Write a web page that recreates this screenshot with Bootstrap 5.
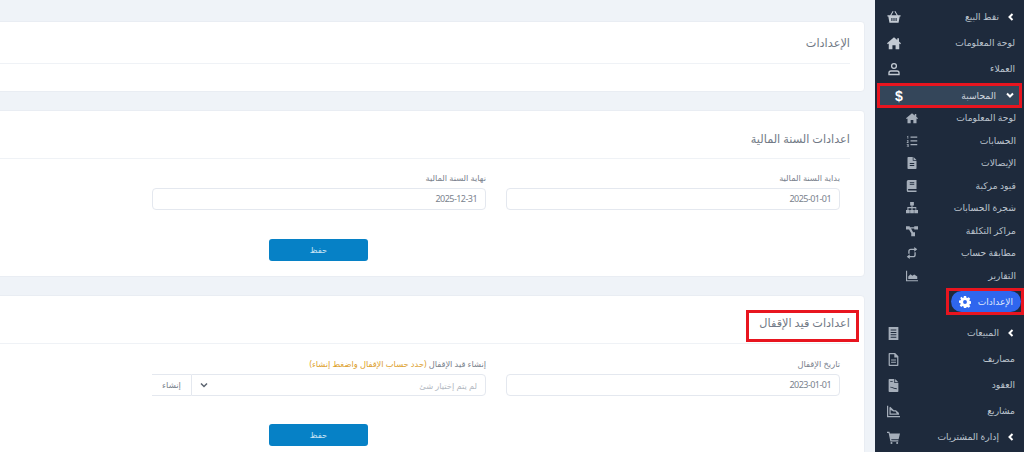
<!DOCTYPE html>
<html lang="ar" dir="rtl">
<head>
<meta charset="utf-8">
<title>الإعدادات</title>
<link rel="stylesheet" href="https://cdn.jsdelivr.net/npm/bootstrap@5.3.0/dist/css/bootstrap.min.css">
<style>
html,body{height:452px;overflow:hidden}
body{background:#eff3f8;font-family:"Noto Sans","DejaVu Sans",sans-serif;color:#5c6470}
.shell{height:452px}
.side{width:149px;flex:none;background:#1e2a3c;padding-top:4px;color:#bcc4ce;font-size:9.200px;white-space:nowrap;overflow:hidden}
.side svg{display:block}
.nav-row{height:26px;padding-right:9px;padding-left:12px}
.nav-row .ic{width:14px;height:14px;fill:#c3cad3}
.nav-row .ic.dim{fill:#a5aeba;width:13px;height:13px}
.chev{width:8px;height:8px;margin-left:8px;stroke:#fff;stroke-width:2;fill:none}
.nav-row.pick{height:25px;margin:1px 2px 0;padding-right:5px;padding-left:15px;background:#34465a;color:#cfd5dd;border:3px solid #e8151f}
.pick .chev{margin-left:10px}
.dollar{font-size:14px;font-weight:700;color:#fff;line-height:1;font-family:"Liberation Sans",sans-serif}
.sub-row{height:22.500px;padding-right:8px;padding-left:31px}
.sub-row .ic{width:12px;height:12px;fill:#a5aeba}
.sub-wrap{margin-top:-1px}
.pill-wrap{margin:1px 0 5px auto;width:78px;height:27px;border:3px solid #e8151f;padding:0 0 0 2px}
.pill{height:21px;border-radius:11px;background:#2f66ee;color:#dfe7fb;padding:0 8px;font-size:9px}
.pill svg{width:12px;height:12px;fill:#fff}
.canvas{flex:1 1 0;min-width:0;overflow:hidden;padding-top:21px;padding-right:10px}
.panel{width:1089px;background:#fff;border:1px solid #e9edf3;border-radius:4px;padding:0 14px;flex:none}
.panel-a{height:71px;margin-bottom:18px}
.panel-b{height:167px;margin-bottom:18px}
.panel-c{height:170px}
.head{border-bottom:1px solid #eff2f6;font-size:11.300px;color:#717985;position:relative}
.panel-a .head{height:42px;padding-top:13px}
.panel-b .head{height:48px;padding-top:20px}
.panel-c .head{height:48px;padding-top:19px}
.annot{position:absolute;top:14px;right:-9px;width:113px;height:32px;border:3px solid #e8151f}
.field-row{padding-top:12px}
.panel-c .field-row{padding-top:13px}
.field{width:354px;padding:0 10px;flex:none}
.cap{font-size:8.300px;line-height:14px;height:17px;color:#7a828d;display:block;margin:0;white-space:nowrap}
.cap em{font-style:normal;color:#dd9f2e}
.box{height:22px;border:1.500px solid #e4e8ef;border-radius:4px;font-size:9px;padding:0 8px;color:#7a828d;line-height:19px;min-height:0}
.digits{letter-spacing:-.55px}
.picker{flex:1 1 0;border-top-left-radius:0;border-bottom-left-radius:0;color:#b4bac3;font-size:8.300px}
.picker svg{width:8px;height:8px;stroke:#5c6470;stroke-width:1.500;fill:none}
.addon{width:39px;flex:none;border-right:0;border-left:0;border-radius:0;font-size:8.500px;background:#fff;text-align:center;padding:0}
.foot{padding-right:4px}
.foot-b{padding-top:26px}
.foot-c{padding-top:25px}
.save{width:99px;height:22px;padding:0;background:#0681c6;border:0;border-radius:3px;font-size:8.500px;line-height:22px;color:#c6e3f4}
.defs{width:0;height:0;position:absolute}
</style>
</head>
<body>
<svg class="defs" aria-hidden="true">
<symbol id="i-home" viewBox="0 0 16 16"><path d="M8 1.500 0 8.300l1 1.100 1-.8V15h4.200v-4.400h3.600V15H14V8.600l1 .8 1-1.100-2.300-2V2.500h-2v2.100z"/></symbol>
<symbol id="i-list" viewBox="0 0 16 16"><path d="M1.500 1.500 3 1v4h-1V2.400l-.5.1zM6 2h9v1.500H6zM6 7h9v1.500H6zM6 12h9v1.500H6zM1 7.500C1.200 6.500 3.500 6.500 3.500 8c0 .9-.9 1.200-1.300 1.700h1.300v.8H1v-.8C1.500 9 2.500 8.600 2.500 8c0-.5-.6-.4-.7 0zM1 12h2.500v4H1v-.8h1.500v-.8H1.500v-.7h1v-.8H1z"/></symbol>
<symbol id="i-file" viewBox="0 0 16 16"><path d="M3 0h6v5h5v10a1 1 0 0 1-1 1H3a1 1 0 0 1-1-1V1a1 1 0 0 1 1-1zm7 0 4 4h-4zM5 8v1.200h6V8zm0 2.800V12h6v-1.200z"/></symbol>
<symbol id="i-book" viewBox="0 0 16 16"><path d="M3 0h11v12H3.500a1 1 0 0 0 0 2H14v2H3a2 2 0 0 1-2-2V2a2 2 0 0 1 2-2zm2 3v1.200h6V3zm0 2.500v1.200h6V5.500z"/></symbol>
<symbol id="i-tree" viewBox="0 0 16 16"><path d="M5.500 0h5v4.500H8.700v2.300h5V10.500H16V15h-5v-4.500h1.700V8.300H8.700v2.200h1.800V15h-5v-4.500h1.800V8.300H3.300v2.200H5V15H0v-4.500h1.800V6.800h5.500V4.500H5.500z"/></symbol>
<symbol id="i-nodes" viewBox="0 0 16 16"><path d="M0 1.500h5V3h6V1.500h5v4.500h-5V4.500H6.700l2.800 5H12V15H7V11l-3-5H0z"/></symbol>
<symbol id="i-sync" viewBox="0 0 16 16"><path d="M11 0v2.200H6.500A3.500 3.500 0 0 0 3 5.700V9H4.800V5.700c0-1 .8-1.700 1.700-1.700H11v2.200L15 3zM5 16v-2.200h4.500a3.500 3.500 0 0 0 3.500-3.500V7h-1.800v3.300c0 1-.8 1.700-1.700 1.700H5V9.800L1 13z"/></symbol>
<symbol id="i-chart" viewBox="0 0 16 16"><path d="M0 1h1.500v12.500H16V15H0zM3 12V8.500l3-3 2.500 2 2.500-1.500 4 2.500V12z"/></symbol>
<symbol id="i-lines" viewBox="0 0 16 16"><path d="M2 0h12v16H2zm2.500 3v1.300h7V3zm0 3v1.300h7V6zm0 3v1.300h7V9zm0 3v1.300h7V12z"/></symbol>
<symbol id="i-doc" viewBox="0 0 16 16"><path d="M3 0h7l4 4v11a1 1 0 0 1-1 1H3a1 1 0 0 1-1-1V1a1 1 0 0 1 1-1zm.500 1.500v13h9V5.500H9v-4zM5 8h6v1.200H5zm0 2.800h6V12H5z"/></symbol>
<symbol id="i-inv" viewBox="0 0 16 16"><path d="M3 0h6v5h5v10a1 1 0 0 1-1 1H3a1 1 0 0 1-1-1V1a1 1 0 0 1 1-1zm7 0 4 4h-4zM4 2.500v1h3v-1zM4 9.500v1c3 0 3 2 8 2v-1c-4 0-5-2-8-2z"/></symbol>
<symbol id="i-line" viewBox="0 0 16 16"><path d="M0 1h1.500v12.500H16V15H0zM3 3l1-1 4.500 4.500H11l3.500 3 .5 2.500H3zm1.500 3v4.500H12l-1.500-2.500H8z"/></symbol>
<symbol id="i-cart" viewBox="0 0 16 16"><path d="M0 1h3l.5 2H16l-1.700 7H5.200l.3 1.500H14V13H4.200L2 2.500H0z"/><circle cx="5.500" cy="14.700" r="1.300"/><circle cx="12.500" cy="14.700" r="1.300"/></symbol>
<symbol id="i-gear" viewBox="0 0 16 16"><path fill-rule="evenodd" d="M6.500 0h3l.4 2.200 1.300.6L13 1.500l2 2.200-1.200 1.800.5 1.300 2.200.4v3l-2.200.4-.5 1.300 1.200 1.800-2 2.100-1.800-1.200-1.300.5L9.500 16h-3l-.4-2.100-1.300-.5L3 14.600l-2-2.100 1.200-1.800-.5-1.300L0 9V6l2.200-.4.500-1.300L1.500 2.500l2-1.500 1.300 1.800 1.300-.6zM8 5.400a2.600 2.600 0 1 0 0 5.200 2.600 2.600 0 0 0 0-5.200z"/></symbol>
</svg>
<div class="shell d-flex">
  <aside class="side">
    <div class="nav-row d-flex align-items-center justify-content-between">
      <span class="d-flex align-items-center"><svg class="chev" viewBox="0 0 8 8"><path d="M5.500 1 2.500 4 5.500 7"/></svg>نقط البيع</span>
      <svg class="ic" viewBox="0 0 16 16"><path d="M6.500 1 3.600 6H.5v1.500h1l1.300 7h10.400l1.300-7h1V6h-3.100L9.500 1l-1 .6L11 6H5l2.500-4.400zM5 9h1.200v3.500H5zm2.400 0h1.200v3.500H7.400zm2.400 0H11v3.500H9.800z"/></svg>
    </div>
    <div class="nav-row d-flex align-items-center justify-content-between">
      <span>لوحة المعلومات</span><svg class="ic"><use href="#i-home"/></svg>
    </div>
    <div class="nav-row d-flex align-items-center justify-content-between">
      <span>العملاء</span>
      <svg class="ic" viewBox="0 0 16 16"><path d="M8 1a3.500 3.500 0 1 1 0 7 3.500 3.500 0 0 1 0-7zm0 1.500a2 2 0 1 0 0 4 2 2 0 0 0 0-4zM4.500 9.500h7a3 3 0 0 1 3 3V15h-13v-2.500a3 3 0 0 1 3-3zm0 1.500A1.500 1.500 0 0 0 3 12.500v1h10v-1a1.500 1.500 0 0 0-1.500-1.500z"/></svg>
    </div>
    <div class="nav-row pick d-flex align-items-center justify-content-between">
      <span class="d-flex align-items-center"><svg class="chev" viewBox="0 0 8 8"><path d="M1 2.500 4 5.500 7 2.500"/></svg>المحاسبة</span>
      <span class="dollar">$</span>
    </div>
    <div class="sub-wrap">
      <div class="sub-row d-flex align-items-center justify-content-between"><span>لوحة المعلومات</span><svg class="ic"><use href="#i-home"/></svg></div>
      <div class="sub-row d-flex align-items-center justify-content-between"><span>الحسابات</span><svg class="ic"><use href="#i-list"/></svg></div>
      <div class="sub-row d-flex align-items-center justify-content-between"><span>الإيصالات</span><svg class="ic"><use href="#i-file"/></svg></div>
      <div class="sub-row d-flex align-items-center justify-content-between"><span>قيود مركبة</span><svg class="ic"><use href="#i-book"/></svg></div>
      <div class="sub-row d-flex align-items-center justify-content-between"><span>شجرة الحسابات</span><svg class="ic"><use href="#i-tree"/></svg></div>
      <div class="sub-row d-flex align-items-center justify-content-between"><span>مراكز التكلفة</span><svg class="ic"><use href="#i-nodes"/></svg></div>
      <div class="sub-row d-flex align-items-center justify-content-between"><span>مطابقة حساب</span><svg class="ic"><use href="#i-sync"/></svg></div>
      <div class="sub-row d-flex align-items-center justify-content-between"><span>التقارير</span><svg class="ic"><use href="#i-chart"/></svg></div>
      <div class="pill-wrap"><div class="pill d-flex align-items-center justify-content-between"><span>الإعدادات</span><svg><use href="#i-gear"/></svg></div></div>
    </div>
    <div class="nav-row d-flex align-items-center justify-content-between">
      <span class="d-flex align-items-center"><svg class="chev" viewBox="0 0 8 8"><path d="M5.500 1 2.500 4 5.500 7"/></svg>المبيعات</span><svg class="ic dim"><use href="#i-lines"/></svg>
    </div>
    <div class="nav-row d-flex align-items-center justify-content-between"><span>مصاريف</span><svg class="ic dim"><use href="#i-doc"/></svg></div>
    <div class="nav-row d-flex align-items-center justify-content-between"><span>العقود</span><svg class="ic dim"><use href="#i-inv"/></svg></div>
    <div class="nav-row d-flex align-items-center justify-content-between"><span>مشاريع</span><svg class="ic dim"><use href="#i-line"/></svg></div>
    <div class="nav-row d-flex align-items-center justify-content-between">
      <span class="d-flex align-items-center"><svg class="chev" viewBox="0 0 8 8"><path d="M5.500 1 2.500 4 5.500 7"/></svg>إدارة المشتريات</span><svg class="ic dim"><use href="#i-cart"/></svg>
    </div>
  </aside>
  <main class="canvas">
    <section class="panel panel-a"><div class="head">الإعدادات</div></section>
    <section class="panel panel-b">
      <div class="head">اعدادات السنة المالية</div>
      <div class="field-row d-flex">
        <div class="field"><label class="cap">بداية السنة المالية</label><div class="form-control box digits">2025-01-01</div></div>
        <div class="field"><label class="cap">نهاية السنة المالية</label><div class="form-control box digits">2025-12-31</div></div>
      </div>
      <div class="foot foot-b text-center"><button class="btn save">حفظ</button></div>
    </section>
    <section class="panel panel-c">
      <div class="head">اعدادات قيد الإقفال<span class="annot"></span></div>
      <div class="field-row d-flex">
        <div class="field"><label class="cap">تاريخ الإقفال</label><div class="form-control box digits">2023-01-01</div></div>
        <div class="field"><label class="cap">إنشاء قيد الإقفال <em>(حدد حساب الإقفال واضغط إنشاء)</em></label>
          <div class="d-flex">
            <div class="form-control box picker d-flex align-items-center justify-content-between w-auto"><span>لم يتم إختيار شئ</span><svg viewBox="0 0 8 8"><path d="M1 2.500 4 5.500 7 2.500"/></svg></div>
            <div class="box addon">إنشاء</div>
          </div>
        </div>
      </div>
      <div class="foot foot-c text-center"><button class="btn save">حفظ</button></div>
    </section>
  </main>
</div>
</body>
</html>
